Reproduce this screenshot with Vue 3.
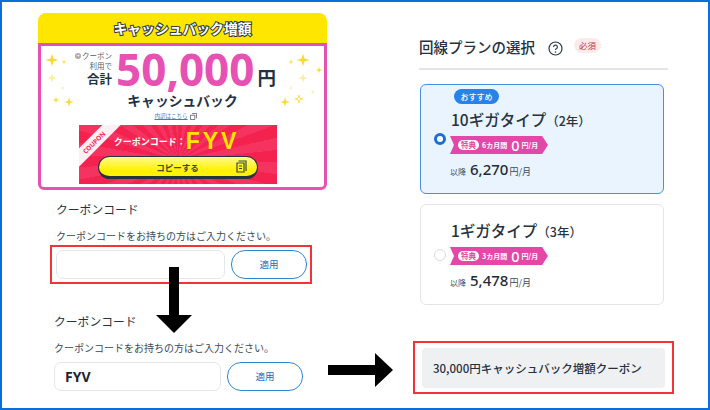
<template>
  <div class="frame">
    <div class="col-left">
      <div class="banner">
        <div class="banner-head"><span>キャッシュバック増額</span></div>
        <div class="banner-body">
          <svg class="sparkles left" viewBox="0 0 40 60" width="40" height="60">
            <path v-for="s in sparklesLeft" :key="s.x + '-' + s.y" :d="star(s)" :fill="s.c" />
          </svg>
          <svg class="sparkles right" viewBox="0 0 40 60" width="40" height="60">
            <path
              v-for="s in sparklesRight"
              :key="s.x + '-' + s.y"
              :d="star(s)"
              :fill="s.hollow ? '#fff' : s.c"
              :stroke="s.hollow ? s.c : 'none'"
              stroke-width="0.8"
            />
          </svg>
          <div class="amount-row">
            <div class="amount-note">
              <span class="note-small"><i class="plus">+</i>クーポン</span>
              <span class="note-small">利用で</span>
              <span class="note-big">合計</span>
            </div>
            <span class="amount">50,000</span>
            <span class="yen">円</span>
          </div>
          <div class="cashback">キャッシュバック</div>
          <div class="detail-link">
            <span>内訳はこちら</span>
            <svg width="7" height="7" viewBox="0 0 8 8"><path d="M2.500 .5h5v5.500M.5 2.500h5v5h-5z" fill="none" stroke="#667" stroke-width="1" /></svg>
          </div>
          <div class="coupon">
            <div class="coupon-tag"><span>COUPON</span></div>
            <div class="coupon-code"><span class="code-label">クーポンコード：</span><span class="code-value">FYV</span></div>
            <div class="copy-btn">
              <span>コピーする</span>
              <svg class="copy-icon" width="11" height="13" viewBox="0 0 11 13">
                <path d="M2.500 1h7.500v10M1 3h7v9H1zM3 6h3M3 8.500h3" fill="none" stroke="#3a4a3a" stroke-width="1.200" />
              </svg>
            </div>
          </div>
        </div>
      </div>

      <div class="coupon-form first">
        <div class="form-title">クーポンコード</div>
        <div class="form-desc">クーポンコードをお持ちの方はご入力ください。</div>
        <div class="form-row outlined">
          <div class="input"></div>
          <div class="apply">適用</div>
        </div>
      </div>

      <div class="coupon-form second">
        <div class="form-title">クーポンコード</div>
        <div class="form-desc">クーポンコードをお持ちの方はご入力ください。</div>
        <div class="form-row">
          <div class="input">FYV</div>
          <div class="apply">適用</div>
        </div>
      </div>

      <svg class="arrow-down" width="38" height="67" viewBox="0 0 38 67">
        <path d="M14 0h10v48h13L19 66 1 48h13z" fill="#000" />
      </svg>
      <svg class="arrow-right" width="66" height="34" viewBox="0 0 66 34">
        <path d="M0 12h47V0l18 17-18 17V22H0z" fill="#000" />
      </svg>
    </div>

    <div class="col-right">
      <div class="plan-head">
        <span class="plan-title">回線プランの選択</span>
        <svg class="help" width="15" height="15" viewBox="0 0 15 15">
          <circle cx="7.500" cy="7.500" r="6.500" fill="none" stroke="#2b3a4a" stroke-width="1.200" />
          <path d="M5.600 6a1.900 1.900 0 1 1 2.900 1.600c-.7.400-1 .8-1 1.500" fill="none" stroke="#2b3a4a" stroke-width="1.200" />
          <circle cx="7.500" cy="11" r=".8" fill="#2b3a4a" />
        </svg>
        <span class="required">必須</span>
      </div>

      <div class="plans">
        <div v-for="p in plans" :key="p.name" class="plan" :class="{ active: p.active }">
          <span class="radio"></span>
          <div class="plan-info">
            <span v-if="p.active" class="recommend">おすすめ</span>
            <div class="plan-name">{{ p.name }}<small>（{{ p.term }}）</small></div>
            <div class="ribbon">
              <span class="perk">特典</span>
              <span class="ribbon-months">{{ p.months }}カ月間</span>
              <span class="ribbon-zero">0</span>
              <span class="ribbon-unit">円/月</span>
            </div>
            <div class="price"><span class="after">以降</span><b>{{ p.price }}</b><span class="unit">円/月</span></div>
          </div>
        </div>
      </div>

      <div class="result-box">
        <div class="result">30,000円キャッシュバック増額クーポン</div>
      </div>
    </div>
  </div>
</template>

<script setup>
const plans = [
  { name: "10ギガタイプ", term: "2年", months: 6, price: "6,270", active: true },
  { name: "1ギガタイプ", term: "3年", months: 3, price: "5,478", active: false },
];

const Y = "#fcd835";
const P = "#fdeea0";
const sparklesLeft = [
  { x: 11, y: 9, r: 6.5, c: Y },
  { x: 23, y: 11, r: 2.5, c: Y },
  { x: 11, y: 27, r: 5, c: P },
  { x: 22, y: 37, r: 1.5, c: Y },
  { x: 1, y: 41, r: 1.5, c: P },
  { x: 15, y: 49, r: 3.5, c: Y },
  { x: 28, y: 51, r: 5, c: Y },
];
const sparklesRight = [
  { x: 7, y: 11, r: 2.5, c: Y },
  { x: 19, y: 9, r: 6.5, c: Y },
  { x: 35, y: 19, r: 3.5, c: Y },
  { x: 19, y: 27, r: 5, c: P },
  { x: 7, y: 37, r: 1.5, c: Y },
  { x: 29, y: 41, r: 2.5, c: P },
  { x: 15, y: 48, r: 4, c: Y, hollow: true },
  { x: 1, y: 51, r: 5, c: Y },
];

function star({ x, y, r }) {
  const k = r * 0.22;
  return `M${x} ${y - r}L${x + k} ${y - k}L${x + r} ${y}L${x + k} ${y + k}L${x} ${y + r}L${x - k} ${y + k}L${x - r} ${y}L${x - k} ${y - k}Z`;
}
</script>

<style>
html, body {
  margin: 0;
  background: #fff;
}
</style>

<style scoped>
.frame {
  width: 710px;
  height: 410px;
  box-sizing: border-box;
  border: 2px solid #0a6fd9;
  display: flex;
  overflow: hidden;
  background: #fff;
  color: #24313f;
  font-family: "Noto Sans CJK JP", "Noto Sans", sans-serif;
}

.col-left {
  position: relative;
  width: 411px;
  padding: 11px 0 0 36px;
  box-sizing: border-box;
}

.banner {
  width: 289px;
}

.banner-head {
  height: 30px;
  background: #ffe600;
  border-radius: 8px 8px 0 0;
  display: flex;
  align-items: center;
  justify-content: center;
  font-size: 13.800px;
  font-weight: 700;
  color: #fff;
  -webkit-text-stroke: 2px #2f3b3a;
  paint-order: stroke fill;
}

.banner-body {
  position: relative;
  height: 147px;
  box-sizing: border-box;
  border: 3px solid #e651b3;
  border-radius: 0 0 6px 6px;
  display: flex;
  flex-direction: column;
  align-items: center;
}

.sparkles {
  position: absolute;
  top: 5px;
  overflow: visible;
}
.sparkles.left { left: 0; }
.sparkles.right { right: 0; }

.amount-row {
  display: flex;
  align-items: flex-end;
  height: 40px;
  margin: 3px 0 0 -14px;
}

.amount-note {
  display: flex;
  flex-direction: column;
  align-items: flex-end;
  margin: 0 4px 3px 0;
}

.note-small {
  font-size: 7.500px;
  line-height: 10px;
  color: #555f6a;
}

.plus {
  display: inline-block;
  width: 6px;
  height: 6px;
  margin-right: 1px;
  border-radius: 50%;
  background: #aaa;
  color: #fff;
  font-size: 6px;
  line-height: 6px;
  font-style: normal;
  text-align: center;
  vertical-align: 1px;
}

.note-big {
  font-size: 12.500px;
  line-height: 15px;
  font-weight: 700;
  color: #1f3347;
}

.amount {
  font-family: "Noto Sans", sans-serif;
  font-size: 44px;
  line-height: 40px;
  font-weight: 700;
  color: #e651b3;
}

.yen {
  font-size: 18.500px;
  line-height: 24px;
  font-weight: 700;
  color: #1f3347;
  margin-left: 3px;
}

.cashback {
  margin-top: 2px;
  font-size: 13.800px;
  line-height: 18px;
  font-weight: 700;
  color: #1f3347;
}

.detail-link {
  margin: 3px 0 0 -14px;
  display: flex;
  align-items: center;
  gap: 2px;
  font-size: 5.500px;
  line-height: 8px;
  color: #3a7fc4;
}

.detail-link span {
  text-decoration: underline;
}

.coupon {
  position: relative;
  flex: none;
  width: 198px;
  height: 59px;
  margin: 5px 0 0 -9px;
  overflow: hidden;
  background: repeating-conic-gradient(from 0deg at 50% 60%, #f4224f 0 7deg, #f43360 7deg 14deg);
  display: flex;
  flex-direction: column;
  align-items: center;
}

.coupon-tag {
  position: absolute;
  left: -20px;
  top: 11px;
  width: 70px;
  height: 13px;
  background: #fdf0f2;
  transform: rotate(-45deg);
  text-align: center;
  font-family: "Noto Sans", sans-serif;
  font-size: 6.500px;
  line-height: 13px;
  font-weight: 700;
  color: #f4224f;
}

.coupon-code {
  display: flex;
  align-items: center;
  height: 27px;
  margin: 3px 3px 1px 0;
}

.code-label {
  font-size: 9px;
  font-weight: 700;
  color: #fff;
}

.code-value {
  font-family: "Liberation Sans", sans-serif;
  font-size: 23px;
  font-weight: 700;
  letter-spacing: 3px;
  color: #ffe600;
}

.copy-btn {
  position: relative;
  width: 160px;
  height: 23px;
  box-sizing: border-box;
  border: 1px solid #26323f;
  border-bottom-width: 3px;
  border-radius: 12px;
  background: linear-gradient(#fff98a, #fff200 70%);
  display: flex;
  align-items: center;
  justify-content: center;
  font-size: 8.500px;
  font-weight: 700;
  color: #3a4a3a;
  margin-right: 1px;
}

.copy-icon {
  position: absolute;
  right: 10px;
  top: 3px;
}

.coupon-form {
  display: flex;
  flex-direction: column;
}

.first {
  margin-top: 11px;
  padding-left: 18px;
}

.second {
  margin-top: 29px;
  padding-left: 16px;
}

.form-title {
  font-size: 11.800px;
  line-height: 16px;
}

.form-desc {
  margin-top: 12px;
  font-size: 10px;
  line-height: 14px;
  color: #3b4a58;
  white-space: nowrap;
}

.form-row {
  display: flex;
  gap: 6px;
  margin-top: 7px;
}

.first .form-row {
  margin-top: 2px;
  width: 262px;
  box-sizing: border-box;
}

.outlined {
  margin-left: -6px;
  padding: 3px 4px;
  border: 2px solid #f2333a;
}

.input {
  flex: none;
  width: 169px;
  height: 29px;
  box-sizing: border-box;
  border: 1px solid #e4e7ea;
  border-radius: 7px;
  padding-left: 10px;
  font-family: "Noto Sans", sans-serif;
  font-size: 14px;
  font-weight: 700;
  line-height: 27px;
  color: #1b2530;
}

.second .input {
  width: 167px;
}

.apply {
  flex: none;
  width: 76px;
  height: 29px;
  box-sizing: border-box;
  border: 1px solid #2f86cf;
  border-radius: 14px;
  font-size: 9.500px;
  line-height: 27px;
  text-align: center;
  color: #1c6cb5;
}

.arrow-down {
  position: absolute;
  left: 153px;
  top: 265px;
}

.arrow-right {
  position: absolute;
  left: 326px;
  top: 351px;
}

.col-right {
  width: 261px;
  padding-top: 31px;
}

.plan-head {
  display: flex;
  align-items: center;
  width: 249px;
  height: 35px;
  margin-left: 6px;
  border-bottom: 2px solid #e3e3ea;
  box-sizing: content-box;
}

.plan-title {
  font-size: 14.500px;
  line-height: 22px;
  margin-top: -8px;
  font-weight: 500;
}

.help {
  margin: -4px 0 0 13px;
}

.required {
  margin: -10px 0 0 11px;
  width: 27px;
  height: 15px;
  border-radius: 8px;
  background: #fdeaea;
  color: #c8373c;
  font-size: 8.500px;
  line-height: 15px;
  text-align: center;
}

.plans {
  display: flex;
  flex-direction: column;
  gap: 10px;
  margin: 14px 0 0 7px;
  width: 244px;
}

.plan {
  display: flex;
  align-items: center;
  box-sizing: border-box;
  height: 101px;
  border: 1px solid #e3e5e8;
  border-radius: 6px;
  padding-left: 13px;
}

.plan.active {
  height: 110px;
  background: #e9f4fe;
  border-color: #4a8fdc;
}

.radio {
  flex: none;
  width: 12px;
  height: 12px;
  box-sizing: border-box;
  border: 1px solid #d8dadd;
  border-radius: 50%;
  background: #fff;
}

.active .radio {
  border: 3px solid #1a6fd0;
}

.plan-info {
  display: flex;
  flex-direction: column;
  align-items: flex-start;
  margin-left: 4px;
}

.recommend {
  margin: -10px 0 4px 4px;
  width: 45px;
  height: 15px;
  border-radius: 8px;
  background: #2782ea;
  color: #fff;
  font-size: 8px;
  font-weight: 500;
  line-height: 15px;
  text-align: center;
}

.plan-name {
  margin-left: 1px;
  font-size: 15.500px;
  line-height: 22px;
  font-weight: 500;
  color: #27333f;
  white-space: nowrap;
}

.plan-name small {
  font-size: 12.500px;
  font-weight: 500;
}

.ribbon {
  display: flex;
  align-items: center;
  margin-top: 4px;
  width: 98px;
  height: 18px;
  padding-left: 8px;
  box-sizing: border-box;
  background: #e348a8;
  color: #fff;
  clip-path: polygon(0 0, 94% 0, 100% 50%, 94% 100%, 0 100%, 4px 50%);
}

.perk {
  width: 21px;
  height: 10px;
  border-radius: 5px;
  background: #fff;
  color: #e348a8;
  font-size: 7.500px;
  line-height: 10px;
  font-weight: 700;
  text-align: center;
}

.ribbon-months {
  margin-left: 3px;
  font-size: 7px;
  font-weight: 700;
  white-space: nowrap;
}

.ribbon-zero {
  margin-left: 4px;
  font-family: "Noto Sans", sans-serif;
  font-size: 14.500px;
  line-height: 18px;
  font-weight: 500;
}

.ribbon-unit {
  margin-left: 2px;
  font-size: 7px;
  font-weight: 700;
  white-space: nowrap;
}

.price {
  display: flex;
  align-items: baseline;
  margin-top: 5px;
  font-size: 8px;
  color: #3b4a58;
}

.price b {
  margin-left: 4px;
  font-family: "Noto Sans", sans-serif;
  font-size: 15px;
  font-weight: 500;
  line-height: 20px;
  color: #1f2c38;
}

.price .unit {
  font-size: 9px;
  margin-left: 1px;
}

.result-box {
  margin-top: 36px;
  width: 261px;
  height: 53px;
  box-sizing: border-box;
  border: 2px solid #f2333a;
  padding: 5px 7px;
}

.result {
  height: 40px;
  border-radius: 4px;
  background: #eef0f2;
  padding-left: 11px;
  font-size: 11.500px;
  font-weight: 500;
  line-height: 40px;
  white-space: nowrap;
}
</style>
